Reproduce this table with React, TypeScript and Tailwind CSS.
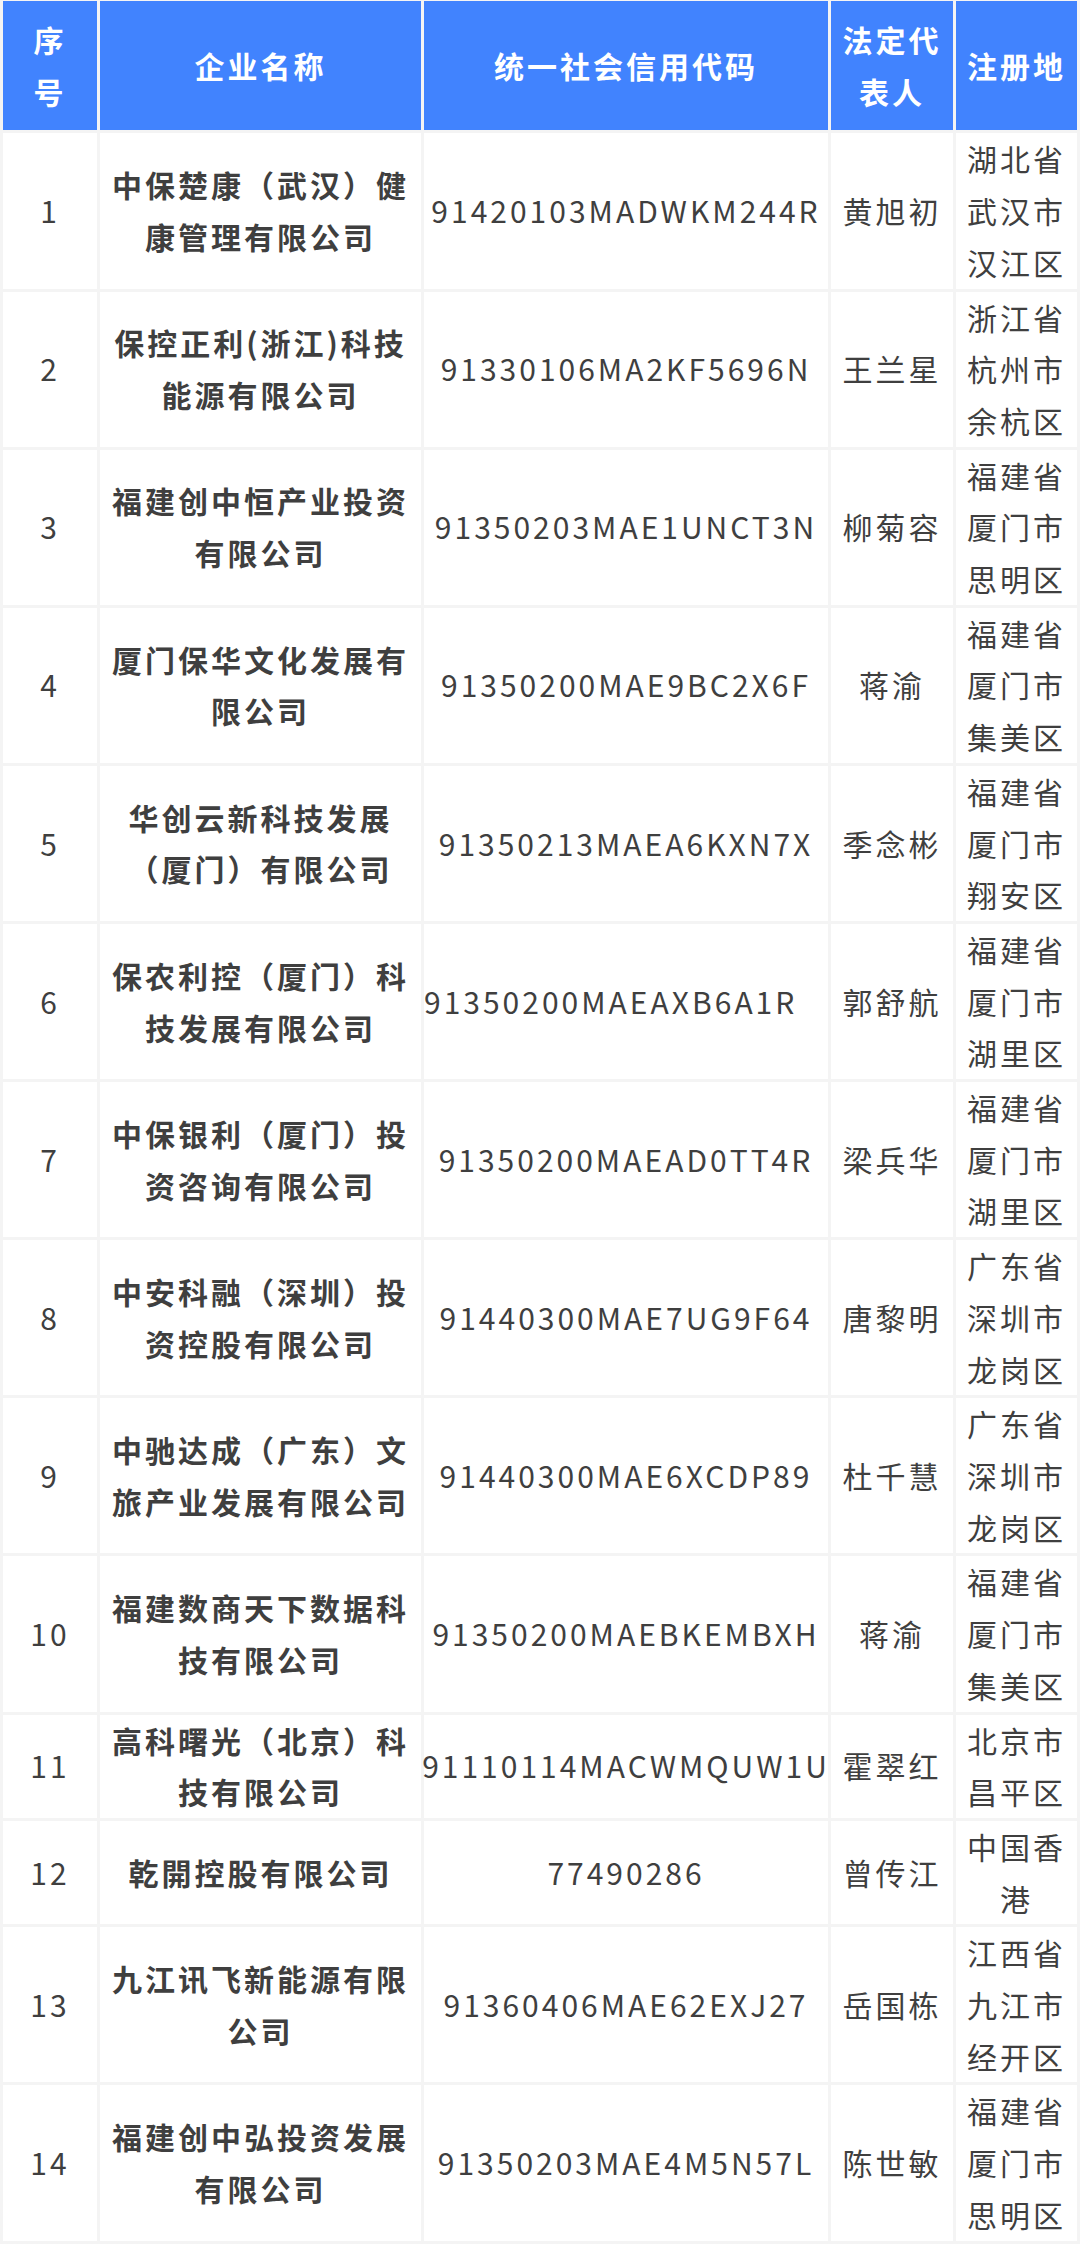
import React from 'react';

type Row = {
  no: number;
  name: string;
  code: string;
  rep: string;
  place: string;
  codeLeft?: boolean;
};

const rows: Row[] = [
  { no: 1, name: '中保楚康（武汉）健康管理有限公司', code: '91420103MADWKM244R', rep: '黄旭初', place: '湖北省武汉市汉江区' },
  { no: 2, name: '保控正利(浙江)科技能源有限公司', code: '91330106MA2KF5696N', rep: '王兰星', place: '浙江省杭州市余杭区' },
  { no: 3, name: '福建创中恒产业投资有限公司', code: '91350203MAE1UNCT3N', rep: '柳菊容', place: '福建省厦门市思明区' },
  { no: 4, name: '厦门保华文化发展有限公司', code: '91350200MAE9BC2X6F', rep: '蒋渝', place: '福建省厦门市集美区' },
  { no: 5, name: '华创云新科技发展（厦门）有限公司', code: '91350213MAEA6KXN7X', rep: '季念彬', place: '福建省厦门市翔安区' },
  { no: 6, name: '保农利控（厦门）科技发展有限公司', code: '91350200MAEAXB6A1R', rep: '郭舒航', place: '福建省厦门市湖里区', codeLeft: true },
  { no: 7, name: '中保银利（厦门）投资咨询有限公司', code: '91350200MAEAD0TT4R', rep: '梁兵华', place: '福建省厦门市湖里区' },
  { no: 8, name: '中安科融（深圳）投资控股有限公司', code: '91440300MAE7UG9F64', rep: '唐黎明', place: '广东省深圳市龙岗区' },
  { no: 9, name: '中驰达成（广东）文旅产业发展有限公司', code: '91440300MAE6XCDP89', rep: '杜千慧', place: '广东省深圳市龙岗区' },
  { no: 10, name: '福建数商天下数据科技有限公司', code: '91350200MAEBKEMBXH', rep: '蒋渝', place: '福建省厦门市集美区' },
  { no: 11, name: '高科曙光（北京）科技有限公司', code: '91110114MACWMQUW1U', rep: '霍翠红', place: '北京市昌平区' },
  { no: 12, name: '乾開控股有限公司', code: '77490286', rep: '曾传江', place: '中国香港' },
  { no: 13, name: '九江讯飞新能源有限公司', code: '91360406MAE62EXJ27', rep: '岳国栋', place: '江西省九江市经开区' },
  { no: 14, name: '福建创中弘投资发展有限公司', code: '91350203MAE4M5N57L', rep: '陈世敏', place: '福建省厦门市思明区' },
];

const head = 'flex items-center justify-center text-center bg-[#4183fe] text-white font-bold py-[13px]';
const cell = 'flex items-center justify-center text-center bg-white text-[#3f3f3f]';

export default function App() {
  return (
    <div
      className="w-[1080px] min-h-[2244px] bg-[#f4f4f4] text-[30px] leading-[51.7px] tracking-[3px]"
      style={{ fontFamily: '"Noto Sans CJK SC", "Noto Sans", sans-serif' }}
    >
      <div className="grid grid-cols-[94px_321px_404px_122px_121px] gap-[3px] px-[3px] pt-px pb-[3px]">
        <div className={`${head} px-4`}>序号</div>
        <div className={head}>企业名称</div>
        <div className={head}>统一社会信用代码</div>
        <div className={head}>法定代表人</div>
        <div className={head}>注册地</div>

        {rows.map((r) => (
          <React.Fragment key={r.no}>
            <div className={cell}>{r.no}</div>
            <div className={`${cell} font-bold text-[#3b3b3b]`}>{r.name}</div>
            <div className={r.codeLeft ? 'flex items-center justify-start bg-white text-[#3f3f3f] whitespace-nowrap' : `${cell} whitespace-nowrap`}>
              {r.code}
            </div>
            <div className={cell}>{r.rep}</div>
            <div className={cell}>{r.place}</div>
          </React.Fragment>
        ))}
      </div>
    </div>
  );
}
